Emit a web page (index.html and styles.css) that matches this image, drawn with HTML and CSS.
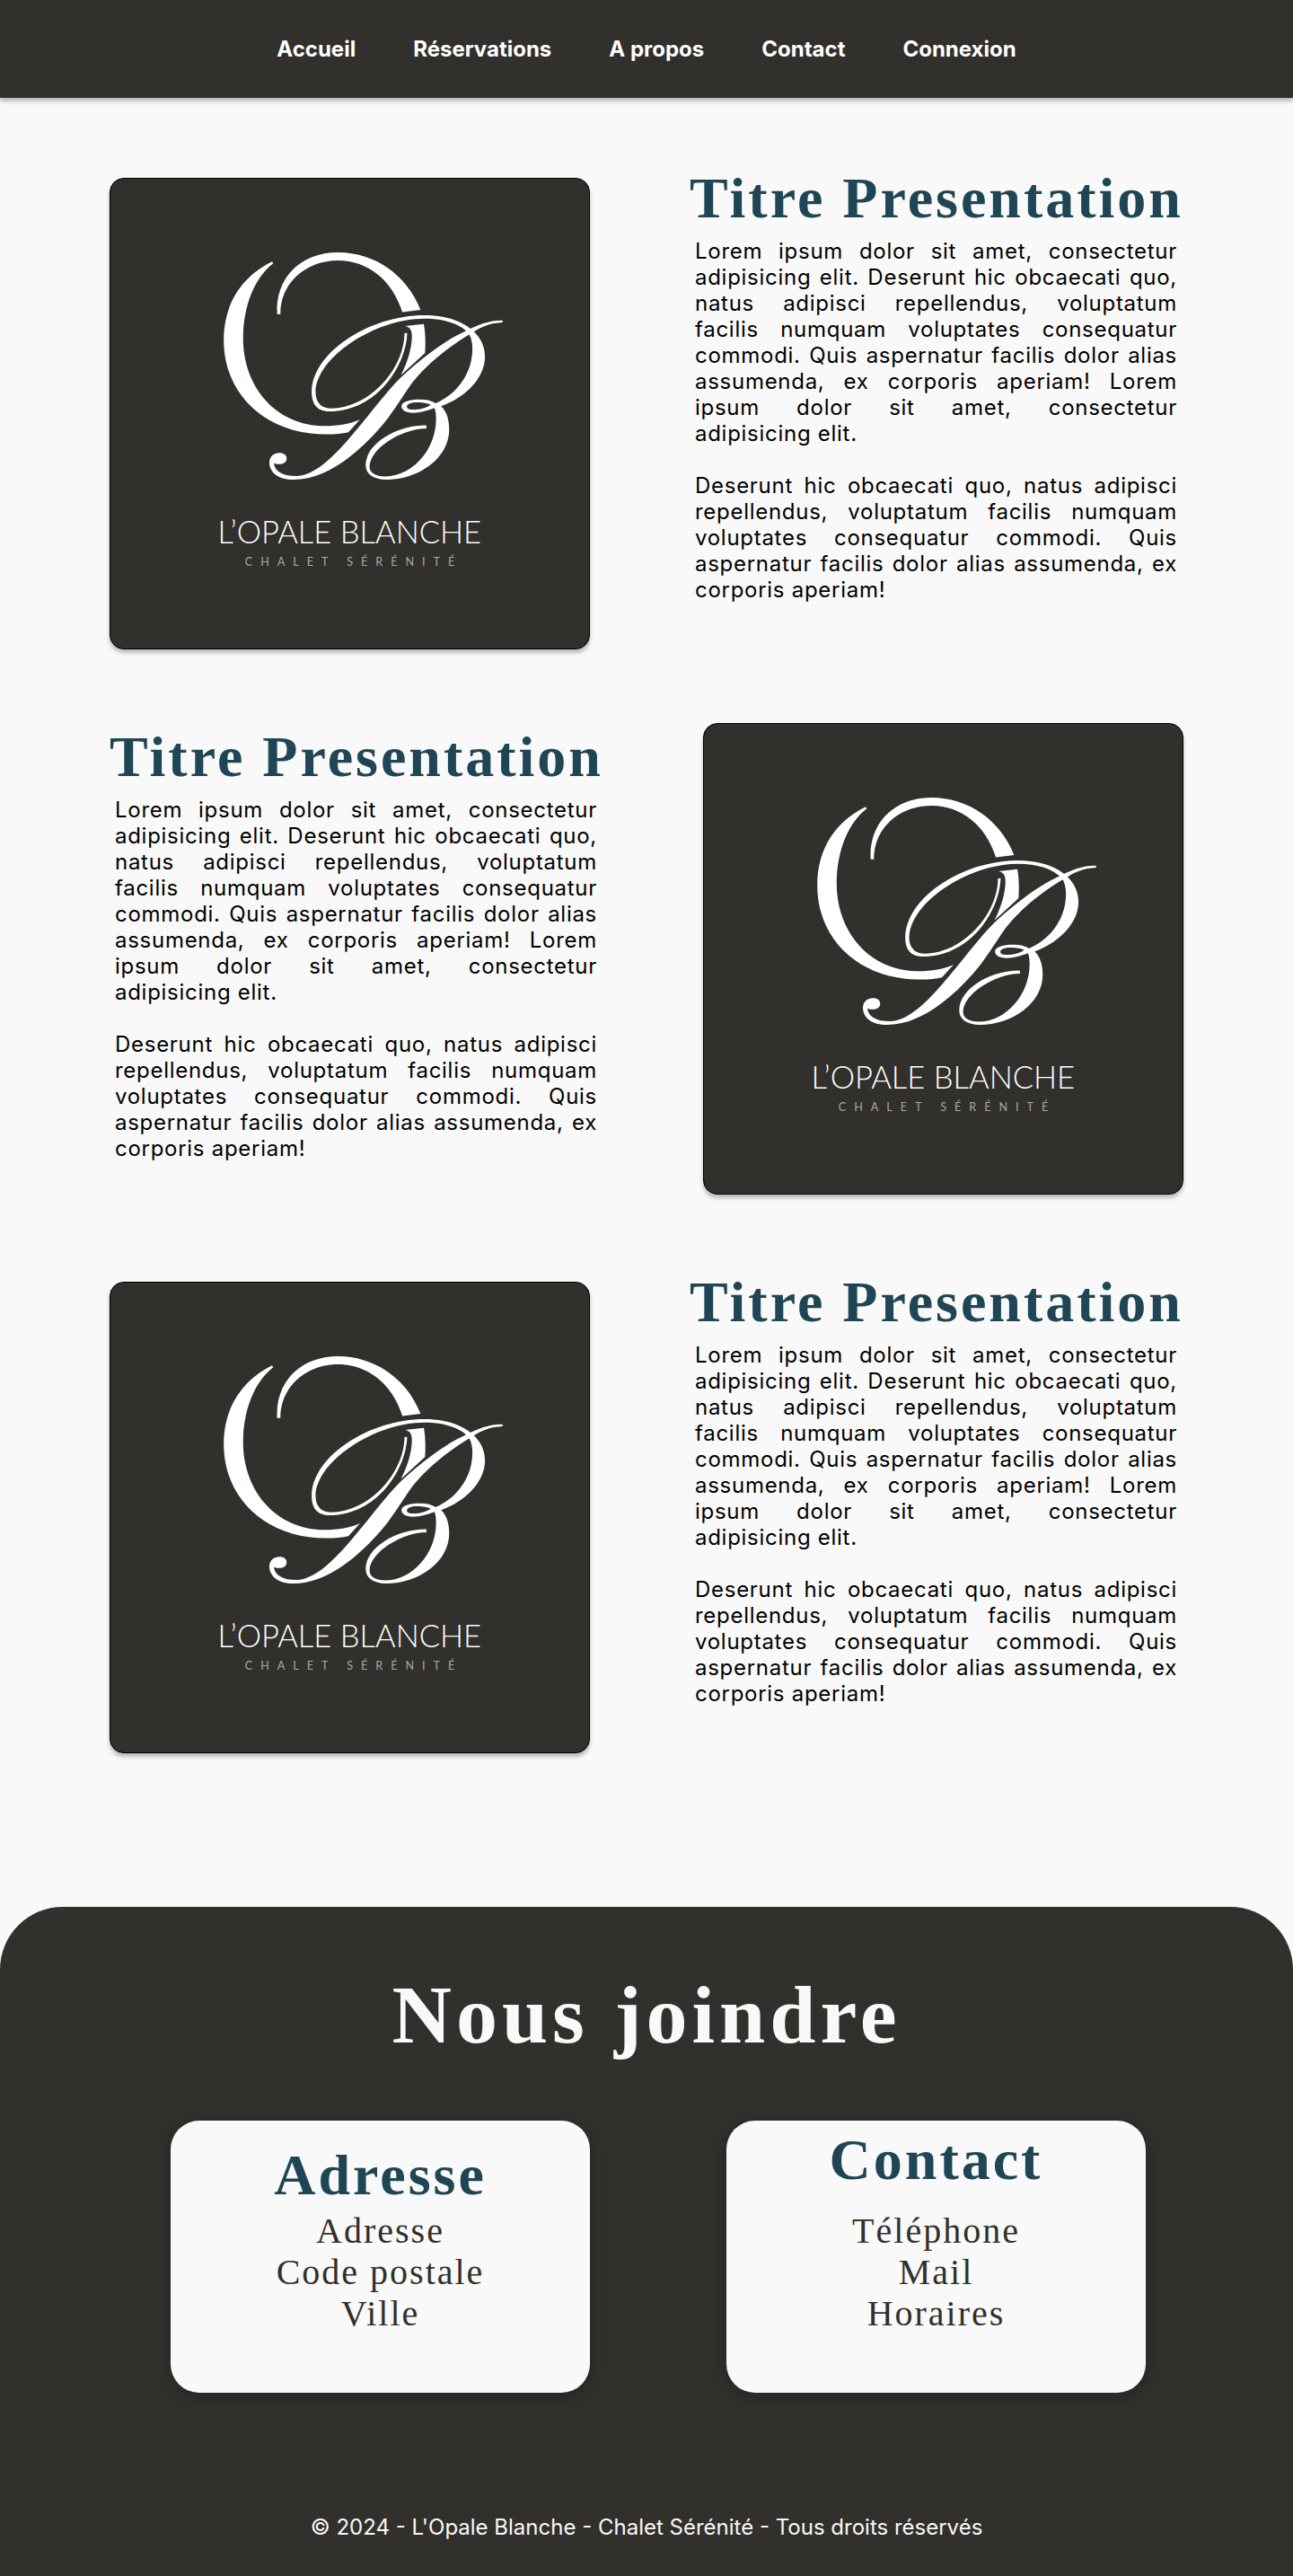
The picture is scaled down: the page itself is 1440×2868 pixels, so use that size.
FILE: index.html
```html
<!DOCTYPE html>
<html lang="fr">
<head>
<meta charset="utf-8">
<meta name="viewport" content="width=device-width, initial-scale=1">
<title>L'Opale Blanche - Chalet Sérénité</title>
<link rel="stylesheet" href="styles.css">
</head>
<body>
<svg class="sprite" aria-hidden="true">
  <symbol id="monogram" viewBox="-324 -186 1605 1575">
    <path d="M218 92C120 140 56 230 56 355C56 540 200 671 400 671C430 671 455 668 474 664L513 621C480 636 440 643 395 643C230 643 121 510 121 350C121 240 160 145 222 98Z"/>
    <path d="M235 268C228 150 310 61 440 61C560 61 670 135 716 254L655 261C620 150 535 88 440 88C330 88 245 165 246 268Z"/>
    <path d="M664 308L727 301C733 335 733 365 731 398L650 473C672 430 686 385 687 345C687 322 682 312 664 308Z"/>
    <path fill-rule="evenodd" d="M671 331C668 440 570 594 410 594C365 594 351 565 351 530C351 400 540 272 730 272C850 272 932 330 932 410C932 480 870 545 785 577C805 595 812 625 812 655C812 750 710 823 600 823C560 823 532 805 532 775C532 700 640 640 735 641L736 651C650 652 545 720 545 780C545 800 565 812 597 812C690 812 768 720 768 620C768 605 767 595 763 583C740 592 715 599 690 599C668 599 652 591 652 577C652 562 680 554 712 554C735 554 755 558 766 567C840 535 890 465 890 385C890 360 884 342 875 330C845 298 790 283 730 283C560 283 365 415 364 530C364 560 380 584 415 584C545 584 662 450 662 332ZM750 572C735 565 715 564 703 564C685 564 670 570 670 578C670 587 685 589 700 588C720 587 738 580 750 572Z"/>
    <path d="M991 289L991 296C950 298 920 310 890 330C800 382 735 440 690 495C650 550 620 605 575 655C490 750 390 823 290 823C240 823 209 800 209 765C209 745 225 733 243 733C258 733 267 741 267 752C267 765 255 771 241 771C233 771 227 769 224 767C226 795 255 811 300 811C370 808 440 730 510 645C560 585 600 530 650 480C720 415 800 355 860 328C910 302 950 288 991 289Z"/>
  </symbol>
</svg>

<header class="site-header">
  <nav class="nav">
    <a href="#accueil">Accueil</a>
    <a href="#reservations">Réservations</a>
    <a href="#apropos">A propos</a>
    <a href="#contact">Contact</a>
    <a href="#connexion">Connexion</a>
  </nav>
</header>

<main class="main" id="accueil">
  <section class="row">
    <svg class="media" viewBox="-324 -186 1605 1575">
      <use href="#monogram" x="-324" y="-186" width="1605" height="1575"/>
      <text class="brand" x="478" y="1038">L’OPALE BLANCHE</text>
      <text class="tagline" x="492" y="1113">CHALET SÉRÉNITÉ</text>
    </svg>
    <div class="text">
      <h2 class="title">Titre Presentation</h2>
      <p>Lorem ipsum dolor sit amet, consectetur adipisicing elit. Deserunt hic obcaecati quo, natus adipisci repellendus, voluptatum facilis numquam voluptates consequatur commodi. Quis aspernatur facilis dolor alias assumenda, ex corporis aperiam! Lorem ipsum dolor sit amet, consectetur adipisicing elit.</p>
      <p>Deserunt hic obcaecati quo, natus adipisci repellendus, voluptatum facilis numquam voluptates consequatur commodi. Quis aspernatur facilis dolor alias assumenda, ex corporis aperiam!</p>
    </div>
  </section>

  <section class="row row-reverse">
    <div class="text">
      <h2 class="title">Titre Presentation</h2>
      <p>Lorem ipsum dolor sit amet, consectetur adipisicing elit. Deserunt hic obcaecati quo, natus adipisci repellendus, voluptatum facilis numquam voluptates consequatur commodi. Quis aspernatur facilis dolor alias assumenda, ex corporis aperiam! Lorem ipsum dolor sit amet, consectetur adipisicing elit.</p>
      <p>Deserunt hic obcaecati quo, natus adipisci repellendus, voluptatum facilis numquam voluptates consequatur commodi. Quis aspernatur facilis dolor alias assumenda, ex corporis aperiam!</p>
    </div>
    <svg class="media" viewBox="-324 -186 1605 1575">
      <use href="#monogram" x="-324" y="-186" width="1605" height="1575"/>
      <text class="brand" x="478" y="1038">L’OPALE BLANCHE</text>
      <text class="tagline" x="492" y="1113">CHALET SÉRÉNITÉ</text>
    </svg>
  </section>

  <section class="row">
    <svg class="media" viewBox="-324 -186 1605 1575">
      <use href="#monogram" x="-324" y="-186" width="1605" height="1575"/>
      <text class="brand" x="478" y="1038">L’OPALE BLANCHE</text>
      <text class="tagline" x="492" y="1113">CHALET SÉRÉNITÉ</text>
    </svg>
    <div class="text">
      <h2 class="title">Titre Presentation</h2>
      <p>Lorem ipsum dolor sit amet, consectetur adipisicing elit. Deserunt hic obcaecati quo, natus adipisci repellendus, voluptatum facilis numquam voluptates consequatur commodi. Quis aspernatur facilis dolor alias assumenda, ex corporis aperiam! Lorem ipsum dolor sit amet, consectetur adipisicing elit.</p>
      <p>Deserunt hic obcaecati quo, natus adipisci repellendus, voluptatum facilis numquam voluptates consequatur commodi. Quis aspernatur facilis dolor alias assumenda, ex corporis aperiam!</p>
    </div>
  </section>
</main>

<footer class="footer" id="contact">
  <h2 class="footer-title">Nous joindre</h2>
  <div class="cards">
    <section class="card card-address">
      <h3 class="title">Adresse</h3>
      <ul class="lines">
        <li>Adresse</li>
        <li>Code postale</li>
        <li>Ville</li>
      </ul>
    </section>
    <section class="card card-contact">
      <h3 class="title">Contact</h3>
      <ul class="lines">
        <li>Téléphone</li>
        <li>Mail</li>
        <li>Horaires</li>
      </ul>
    </section>
  </div>
  <p class="copyright">© 2024 - L'Opale Blanche - Chalet Sérénité - Tous droits réservés</p>
</footer>
</body>
</html>
```

FILE: styles.css
```css
:root {
  --dark: #31302c;
  --light: #f9f9f9;
  --accent: #204655;
  --serif: "Liberation Serif", serif;
}

* {
  box-sizing: border-box;
  margin: 0;
  padding: 0;
}

body {
  background: var(--light);
  color: #000;
  font: 24px/29px Inter, sans-serif;
}

.sprite {
  display: none;
}

.site-header {
  padding: 40px 24px;
  background: var(--dark);
  box-shadow: 0 4px 4px rgba(0, 0, 0, 0.25);
}

.nav {
  display: flex;
  flex-wrap: wrap;
  justify-content: center;
  gap: 0 64px;
}

.nav a {
  color: #fff;
  font-weight: 700;
  text-decoration: none;
}

.main {
  padding: 89px 122px 171px;
}

.row {
  display: grid;
  grid-template-columns: 535fr 550fr;
  column-gap: 111px;
  align-items: start;
}

.row-reverse {
  grid-template-columns: 550fr 535fr;
  margin: 82px 0 97px;
}

.row-reverse .text {
  padding-top: 15px;
}

.media {
  display: block;
  width: 100%;
  aspect-ratio: 535 / 525;
  border: 1px solid #000;
  border-radius: 16px;
  background: var(--dark);
  box-shadow: 0 4px 4px rgba(0, 0, 0, 0.25);
  fill: #fff;
}

.brand,
.tagline {
  font-family: Lato, sans-serif;
  text-anchor: middle;
}

.brand {
  font-size: 104px;
  font-weight: 300;
}

.tagline {
  fill: #a8a8a5;
  font-size: 38px;
  letter-spacing: 27px;
}

.title {
  color: var(--accent);
  font: 700 64px/46px var(--serif);
  letter-spacing: 3px;
  white-space: nowrap;
}

.text .title {
  margin-bottom: 21px;
}

.text p {
  padding: 0 7px 0 6px;
  letter-spacing: 0.03em;
  text-align: justify;
}

.text p + p {
  margin-top: 29px;
}

.footer {
  padding: 74px 0 40px;
  border-radius: 70px 70px 0 0;
  background: var(--dark);
  color: var(--light);
  text-align: center;
}

.footer-title {
  margin-bottom: 72px;
  font: 700 92px/92px var(--serif);
  letter-spacing: 5px;
}

.cards {
  display: grid;
  grid-template-columns: 1fr 1fr;
  column-gap: 152px;
  padding: 0 164px 0 190px;
}

.card {
  display: flex;
  flex-direction: column;
  border-radius: 32px;
  background: var(--light);
  box-shadow: 0 4px 20px rgba(0, 0, 0, 0.25);
}

.card-address {
  gap: 16px;
  padding: 38px 0 65px;
}

.card-contact {
  gap: 33px;
  padding: 21px 0 65px;
}

.lines {
  color: var(--dark);
  font: 40px/46px var(--serif);
  letter-spacing: 2px;
  list-style: none;
}

.copyright {
  margin-top: 135px;
}
```
